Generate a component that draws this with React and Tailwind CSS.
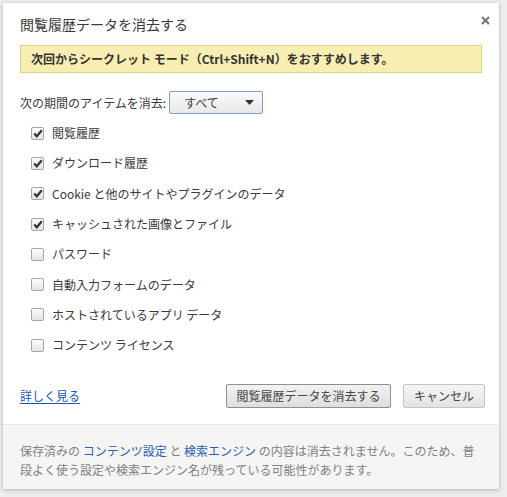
import React from "react";

const font = { fontFamily: '"Noto Sans CJK JP", "Noto Sans", sans-serif' };

function Checkbox({ checked }) {
  return (
    <span className="flex h-[13px] w-[13px] items-center justify-center rounded-[2px] border border-[#a6a6a6] bg-gradient-to-b from-[#fdfdfd] to-[#e4e4e4]">
      {checked && (
        <svg width="10" height="9" viewBox="0 0 10 9">
          <path d="M1.2 4.6 L3.8 7.3 L8.8 1.2" fill="none" stroke="#333" strokeWidth="2.2" strokeLinejoin="miter" />
        </svg>
      )}
    </span>
  );
}

const items = [
  ["閲覧履歴", true],
  ["ダウンロード履歴", true],
  ["Cookie と他のサイトやプラグインのデータ", true],
  ["キャッシュされた画像とファイル", true],
  ["パスワード", false],
  ["自動入力フォームのデータ", false],
  ["ホストされているアプリ データ", false],
  ["コンテンツ ライセンス", false],
];

export default function App() {
  return (
    <div className="h-[497px] w-[507px] bg-[#ededed] pl-[3px] pt-[3px]" style={font}>
      <div className="relative flex h-[486px] w-[496px] flex-col bg-white text-[#3a3a3a] shadow-[0_1px_4px_rgba(0,0,0,0.25)]">
        <button className="absolute right-[7px] top-[10px] flex h-[14px] w-[14px] items-center justify-center">
          <svg width="9" height="9" viewBox="0 0 9 9">
            <path d="M1 1 L8 8 M8 1 L1 8" stroke="#777" strokeWidth="2" />
          </svg>
        </button>
        <div className="px-[17px] pt-[11px]">
          <div className="h-[20px] text-[14px] leading-[20px]">閲覧履歴データを消去する</div>
          <div className="mt-[11px] flex h-[28px] items-center border border-[#e2d183] bg-[#f9eeb2] pl-[10px] text-[12px] font-bold text-[#333]">
            次回からシークレット モード（Ctrl+Shift+N）をおすすめします。
          </div>
          <div className="mt-[18px] flex h-[23px] items-center text-[12px]">
            <span>次の期間のアイテムを消去:</span>
            <div className="ml-[3px] flex h-[23px] w-[94px] items-center justify-between rounded-[2px] border border-[#7d9ccf] bg-gradient-to-b from-[#fbfbfb] to-[#e8e8e8] pl-[14px] pr-[8px]">
              <span>すべて</span>
              <svg width="9" height="5" viewBox="0 0 9 5">
                <path d="M0 0 L9 0 L4.5 5 Z" fill="#333" />
              </svg>
            </div>
          </div>
          <div className="mt-[4px] flex flex-col">
            {items.map(([label, checked]) => (
              <div key={label} className="flex h-[30.3px] items-center gap-[8px] pl-[11px] text-[12px]">
                <Checkbox checked={checked} />
                <span>{label}</span>
              </div>
            ))}
          </div>
          <div className="mt-[24px] flex h-[24px] items-center">
            <a className="text-[12px] text-[#1a55b8] underline underline-offset-2">詳しく見る</a>
            <div className="-mr-[3px] ml-auto flex gap-[12px]">
              <button className="h-[24px] w-[165px] rounded-[2px] border border-[#8f8f8f] bg-gradient-to-b from-[#f3f3f3] to-[#dedede] text-[12px] text-[#444]">
                閲覧履歴データを消去する
              </button>
              <button className="h-[24px] w-[82px] rounded-[2px] border border-[#c4c4c4] bg-gradient-to-b from-[#f6f6f6] to-[#e3e3e3] text-[12px] text-[#444]">
                キャンセル
              </button>
            </div>
          </div>
        </div>
        <div className="mt-auto h-[65px] border-t border-[#e6e6e6] bg-[#f5f5f5] px-[17px] pt-[16px] text-[12px] leading-[19px] text-[#808080]">
          保存済みの <span className="text-[#2a5db0]">コンテンツ設定</span> と <span className="text-[#2a5db0]">検索エンジン</span> の内容は消去されません。このため、普
          <br />
          段よく使う設定や検索エンジン名が残っている可能性があります。
        </div>
      </div>
    </div>
  );
}
